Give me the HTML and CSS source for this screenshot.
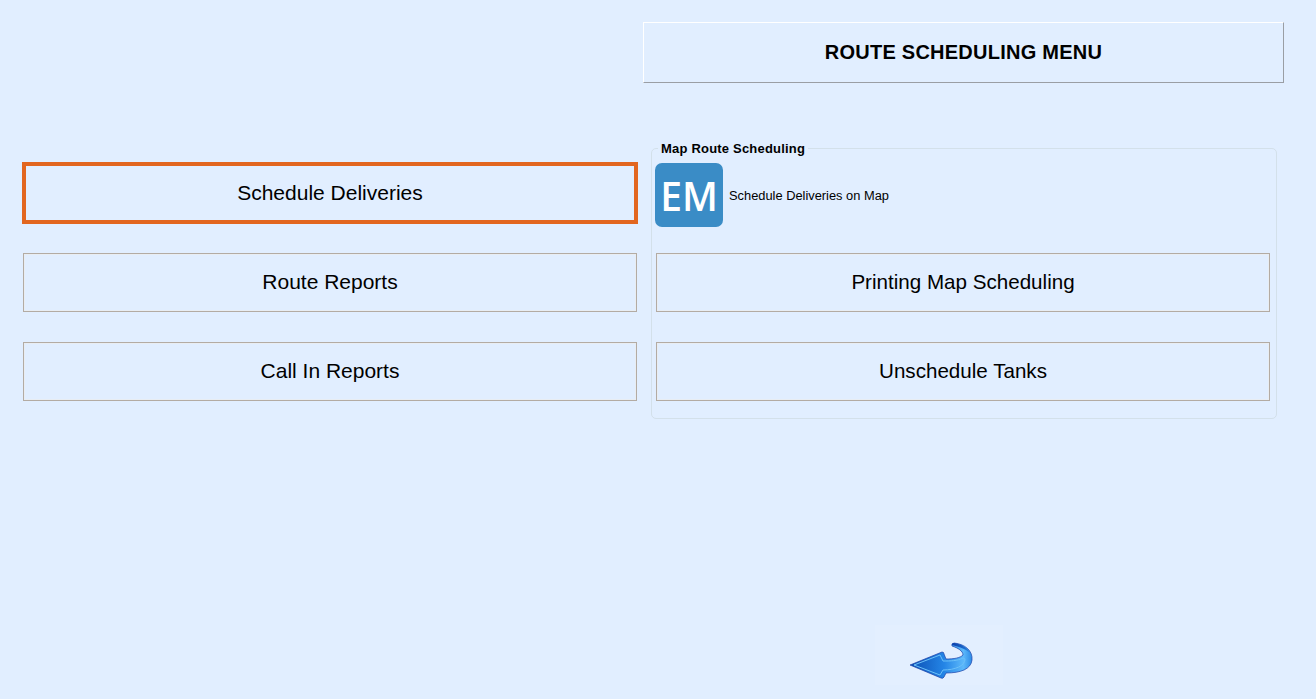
FILE: index.html
```html
<!DOCTYPE html>
<html lang="en">
<head>
<meta charset="utf-8">
<title>Route Scheduling Menu</title>
<link rel="stylesheet" href="styles.css">
</head>
<body>
<header class="title-bar">ROUTE SCHEDULING MENU</header>
<main class="columns">
  <nav class="left-col">
    <button class="menu-btn menu-btn-active">Schedule Deliveries</button>
    <button class="menu-btn">Route Reports</button>
    <button class="menu-btn">Call In Reports</button>
  </nav>
  <fieldset class="map-group">
    <legend class="map-legend">Map Route Scheduling</legend>
    <div class="map-link">
      <span class="em-logo">EM</span>
      <span class="map-link-text">Schedule Deliveries on Map</span>
    </div>
    <button class="menu-btn">Printing Map Scheduling</button>
    <button class="menu-btn">Unschedule Tanks</button>
  </fieldset>
</main>
<footer class="footer">
  <button class="back-btn" aria-label="Back">
    <svg class="back-icon" width="70" height="42" viewBox="905 642 70 42">
      <defs>
        <linearGradient id="arrowFill" x1="0" y1="0" x2="1" y2="0">
          <stop offset="0" stop-color="#0b4fb4"/>
          <stop offset="0.55" stop-color="#2485e6"/>
          <stop offset="0.86" stop-color="#5cb8fa"/>
          <stop offset="1" stop-color="#2c8ae6"/>
        </linearGradient>
        <linearGradient id="tailFill" x1="0" y1="0" x2="1" y2="1">
          <stop offset="0" stop-color="#0a3aa8"/>
          <stop offset="1" stop-color="#2b8ce6"/>
        </linearGradient>
      </defs>
      <path d="M911 665 L943 652 Q945 652 945 654 L947 659 C955 659 961 658 964 655 C964 651 959 648 953 646 Q952 644 955 643 C966 644 974 651 973 660 C972 669 962 673 947 673 L945 677 Q944 679 942 678 Z" fill="url(#arrowFill)" stroke="#1a3fa8" stroke-width="0.7" stroke-linejoin="round"/>
      <path d="M915 665 L941 655 L944 661 C952 661 958 661 964 658 L966 659 C966 666 956 670 944 670 L941 675 Z" fill="none" stroke="#6cc0f8" stroke-width="1"/>
      <path d="M953 645 Q952 643.500 955 643 C962 644 968 647 971 653 C967 649 960 647 953 645 Z" fill="url(#tailFill)"/>
    </svg>
  </button>
</footer>
</body>
</html>
```
FILE: styles.css
```css
* {
  box-sizing: border-box;
}

html,
body {
  height: 100%;
}

body {
  margin: 0;
  padding-top: 22px;
  background: #e1eeff;
  font-family: "Liberation Sans", Arial, sans-serif;
  color: #000;
  display: flex;
  flex-direction: column;
}

.title-bar {
  margin-left: 643px;
  width: 641px;
  height: 61px;
  display: flex;
  align-items: center;
  justify-content: center;
  font-size: 20px;
  font-weight: 700;
  letter-spacing: 0.25px;
  border-style: solid;
  border-width: 1px;
  border-color: #fff #9a9ea4 #9a9ea4 #fff;
}

.columns {
  margin-top: 57px;
  padding-left: 22px;
  display: flex;
  align-items: flex-start;
  gap: 13px;
}

.left-col {
  width: 616px;
  padding-top: 22px;
  display: flex;
  flex-direction: column;
  align-items: center;
}

.menu-btn {
  width: 614px;
  height: 59px;
  margin: 0;
  padding: 0 0 2px;
  font: 21px "Liberation Sans", Arial, sans-serif;
  color: #000;
  background: transparent;
  border: 1px solid #b3aba3;
  box-shadow: inset 0 0 0 1px #e8edf3;
}

.left-col .menu-btn + .menu-btn {
  margin-top: 30px;
}

.menu-btn-active {
  width: 616px;
  height: 62px;
  padding: 0;
  border: 4px solid #e2661f;
  box-shadow: none;
}

.left-col .menu-btn-active + .menu-btn {
  margin-top: 29px;
}

.map-group {
  width: 626px;
  height: 279px;
  margin: 0;
  padding: 7px 0 0 3px;
  border: 1px solid #d3e0ea;
  border-radius: 5px;
  min-width: 0;
}

.map-legend {
  margin-left: 3px;
  padding: 2px 3px 0;
  font-size: 13px;
  font-weight: 700;
  letter-spacing: 0.2px;
  line-height: 14px;
}

.map-link {
  height: 64px;
  display: flex;
  align-items: center;
  gap: 6px;
}

.em-logo {
  width: 68px;
  height: 64px;
  display: flex;
  align-items: center;
  justify-content: center;
  border-radius: 7px;
  background: #3a8cc6;
  color: #fff;
  font-family: "Open Sans", sans-serif;
  font-size: 39px;
  font-weight: 600;
}

.map-link-text {
  font-size: 12.85px;
  padding-top: 1px;
}

.map-group .menu-btn {
  display: block;
  margin-left: 1px;
  font-size: 20.6px;
}

.map-link + .menu-btn {
  margin-top: 26px;
}

.menu-btn + .menu-btn {
  margin-top: 30px;
}

.footer {
  margin-top: auto;
  padding: 0 0 14px 875px;
}

.back-btn {
  width: 128px;
  height: 60px;
  padding: 0 0 1px;
  display: flex;
  align-items: flex-end;
  justify-content: center;
  background: #e3efff;
  border: 0;
}
```
